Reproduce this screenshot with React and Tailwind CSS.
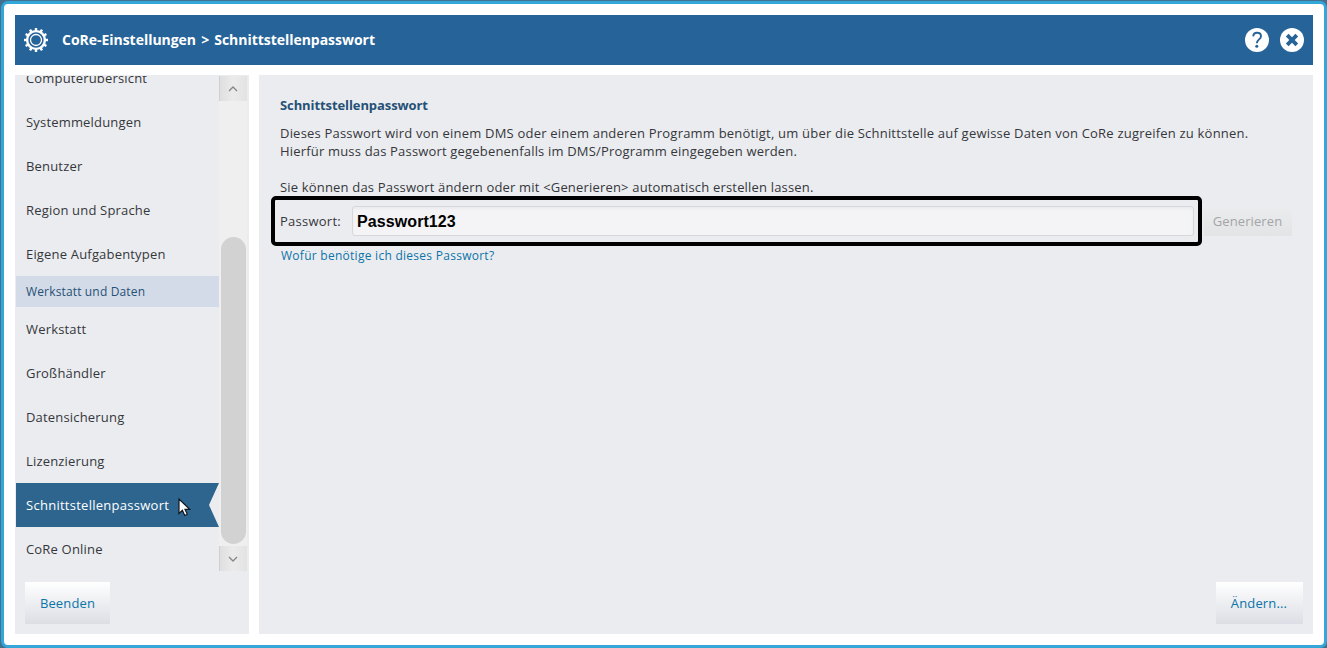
import React from 'react';

const GENERAL_ITEMS = ['Computerübersicht', 'Systemmeldungen', 'Benutzer', 'Region und Sprache', 'Eigene Aufgabentypen'];
const WORKSHOP_ITEMS = ['Werkstatt', 'Großhändler', 'Datensicherung', 'Lizenzierung', 'Schnittstellenpasswort', 'CoRe Online'];
const TEETH = [0, 30, 60, 90, 120, 150, 180, 210, 240, 270, 300, 330];

const GearIcon = () => (
    <svg className="block" width="24" height="24" viewBox="0 0 24 24" fill="none" stroke="#fff">
        <circle cx="12" cy="12" r="8.9" strokeWidth="2.4" />
        <circle cx="12" cy="12" r="5.5" strokeWidth="1.3" />
        {TEETH.map(angle => (
            <path key={angle} d="M12 0v3" strokeWidth="2.4" transform={`rotate(${angle} 12 12)`} />
        ))}
    </svg>
);

const HelpIcon = () => (
    <svg className="block" width="24" height="24" viewBox="0 0 24 24" fill="none">
        <circle cx="12" cy="12" r="12" fill="#fff" />
        <path d="M8.2 8.3C8.4 6 9.900 4.800 12 4.800c2.400 0 4 1.300 4 3.400 0 3.100-4.200 3.300-4.200 7.100" stroke="#266398" strokeWidth="1.900" />
        <circle cx="11.800" cy="18.300" r="1.500" fill="#266398" />
    </svg>
);

const CloseIcon = () => (
    <svg className="block" width="24" height="24" viewBox="0 0 24 24" fill="none">
        <circle cx="12" cy="12" r="12" fill="#fff" />
        <path d="M7.200 7.200l9.600 9.600M16.800 7.200l-9.600 9.600" stroke="#266398" strokeWidth="3.800" />
    </svg>
);

const CursorIcon = () => (
    <svg className="absolute left-[162px] top-[15px]" width="13" height="19" viewBox="0 0 13 19">
        <path d="M1 1v14.500l3.400-3.200 2.300 5.200 2.600-1.200-2.300-5h4.700z" fill="#fff" stroke="#111820" strokeWidth="1.200" />
    </svg>
);

const ScrollButton = ({ d }) => (
    <div className="flex h-[25px] w-7 shrink-0 items-center justify-center border-l border-[#cfcfcf] bg-gradient-to-r from-[#dfdfe0] via-[#ebebeb] to-[#e3e3e3] pr-px">
        <svg width="10" height="6" viewBox="0 0 10 6" fill="none" stroke="#858585" strokeWidth="1.300">
            <path d={d} />
        </svg>
    </div>
);

const NavItem = ({ label, active }) => (
    <div className={`relative flex h-11 shrink-0 items-center pt-0.5 pl-2.5 ${active ? 'bg-[#2d658e] tracking-[0.27px] text-white [clip-path:polygon(0_0,100%_0,193px_50%,100%_100%,0_100%)]' : ''}`}>
        {label}
        {active && <CursorIcon />}
    </div>
);

const Sidebar = () => (
    <aside className="flex w-[234px] flex-col bg-[#ebecf0] pt-px">
        <div className="flex h-[495px] pl-px">
            <nav className="flex w-[203px] flex-col justify-end overflow-hidden tracking-[0.18px]">
                {GENERAL_ITEMS.map(label => <NavItem key={label} label={label} />)}
                <div className="flex h-[31px] shrink-0 items-center bg-[#d4dbe8] pl-2.5 text-[12px] tracking-[0.15px] text-[#255176]">Werkstatt und Daten</div>
                {WORKSHOP_ITEMS.map(label => (
                    <NavItem key={label} label={label} active={label === 'Schnittstellenpasswort'} />
                ))}
            </nav>
            <div className="flex w-7 flex-col bg-[#efefef]">
                <ScrollButton d="M1 5l4-4 4 4" />
                <div className="flex flex-1 flex-col items-end justify-end pr-px pb-0.5">
                    <div className="h-[307px] w-[25px] rounded-full bg-[#d2d2d2]" />
                </div>
                <ScrollButton d="M1 1l4 4 4-4" />
            </div>
        </div>
        <button className="mt-[11px] ml-2.5 h-[42px] w-[85px] bg-gradient-to-b from-white to-[#dcdee5] pt-0.5 tracking-[0.15px] text-[#0b74a8]">Beenden</button>
    </aside>
);

const PasswordPanel = () => (
    <main className="flex flex-1 flex-col bg-[#ebecf0] pr-2.5 pb-2.5 pl-[21px]">
        <h2 className="mt-[21px] leading-[18px] font-bold tracking-[-0.09px] text-[#255176]">Schnittstellenpasswort</h2>
        <p className="mt-2.5 leading-[18px] tracking-[0.205px] whitespace-nowrap">
            Dieses Passwort wird von einem DMS oder einem anderen Programm benötigt, um über die Schnittstelle auf gewisse Daten von CoRe zugreifen zu können.<br />
            <span className="tracking-[0.18px]">Hierfür muss das Passwort gegebenenfalls im DMS/Programm eingegeben werden.</span>
        </p>
        <p className="mt-[18px] leading-[18px] tracking-[0.18px]">Sie können das Passwort ändern oder mit &lt;Generieren&gt; automatisch erstellen lassen.</p>
        <div className="relative mt-2.5 flex h-[30px] items-center">
            <label className="w-[72px] pt-0.5 tracking-[0.25px]">Passwort:</label>
            <div className="flex h-[30px] w-[842px] items-center rounded-[3px] border border-[#d7d8dc] bg-[#f4f4f6] pt-px pl-1 font-['Liberation_Sans',sans-serif] text-[16px] font-bold tracking-[0.09px] text-black shadow-[inset_0_2px_3px_#ebebed]">
                Passwort123
            </div>
            <button className="ml-2.5 h-[29px] w-[88px] bg-gradient-to-b from-[#ebecee] to-[#e3e4e6] pt-0.5 pr-px tracking-[0.1px] text-[#a3a4a7]">Generieren</button>
            <div className="absolute -top-2.5 -left-[9px] h-[50px] w-[931px] rounded-[5px] border-4 border-black" />
        </div>
        <a className="mt-[11px] pl-px leading-[18px] text-[12px] tracking-[0.27px] text-[#0b74a8]">Wofür benötige ich dieses Passwort?</a>
        <button className="mt-auto h-[42px] w-[87px] self-end bg-gradient-to-b from-white to-[#dcdee5] pt-0.5 pr-px tracking-[0.15px] text-[#0b74a8]">Ändern...</button>
    </main>
);

const App = () => (
    <div className="h-[648px] w-[1327px] overflow-hidden bg-[#41718f] pt-px pl-px font-['Open_Sans',sans-serif] text-[13px] text-[#35373b]">
        <div className="flex h-[647px] w-[1326px] flex-col gap-2.5 rounded-[7px] border-[3px] border-[#35a6d8] bg-white p-[11px]">
            <header className="flex h-[50px] shrink-0 items-center bg-[#266398] px-[9px] text-white">
                <GearIcon />
                <h1 className="ml-3.5 flex-1 pb-0.5 text-[14px] font-bold tracking-[-0.03px] [word-spacing:1.5px]">CoRe-Einstellungen &gt; Schnittstellenpasswort</h1>
                <div className="flex gap-[11px]">
                    <HelpIcon />
                    <CloseIcon />
                </div>
            </header>
            <div className="flex h-[559px] shrink-0 gap-2.5">
                <Sidebar />
                <PasswordPanel />
            </div>
        </div>
    </div>
);

export default App;
